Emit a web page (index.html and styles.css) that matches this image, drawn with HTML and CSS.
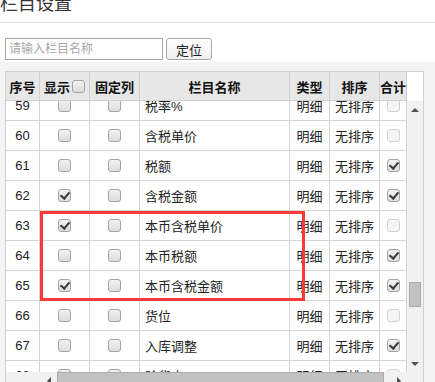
FILE: index.html
```html
<!DOCTYPE html>
<html lang="zh-CN">
<head>
    <meta charset="UTF-8">
    <meta name="viewport" content="width=device-width, initial-scale=1.0">
    <title>栏目设置</title>
    <link rel="stylesheet" href="styles.css">
</head>
<body>

    <div class="page-head">
        <h1 class="title">栏目设置</h1>
    </div>

    <!-- Search -->
    <div class="search-bar">
        <input class="search-input" type="text" placeholder="请输入栏目名称">
        <button class="btn">定位</button>
    </div>

    <div class="content">
        <div class="grid">
            <div class="grid-head">
                <div class="row head-row">
                    <div class="cell">序号</div>
                    <div class="cell">显示<span class="cb head-cb"></span></div>
                    <div class="cell">固定列</div>
                    <div class="cell">栏目名称</div>
                    <div class="cell">类型</div>
                    <div class="cell">排序</div>
                    <div class="cell">合计</div>
                </div>
                <div class="head-fill"></div>
            </div>

            <div class="grid-body">
                <div class="rows-view">
                    <div class="rows">
                        <div class="row">
                            <div class="cell">59</div>
                            <div class="cell"><span class="cb"></span></div>
                            <div class="cell"><span class="cb"></span></div>
                            <div class="cell name">税率%</div>
                            <div class="cell">明细</div>
                            <div class="cell">无排序</div>
                            <div class="cell"><span class="cb off"></span></div>
                        </div>
                        <div class="row">
                            <div class="cell">60</div>
                            <div class="cell"><span class="cb"></span></div>
                            <div class="cell"><span class="cb"></span></div>
                            <div class="cell name">含税单价</div>
                            <div class="cell">明细</div>
                            <div class="cell">无排序</div>
                            <div class="cell"><span class="cb off"></span></div>
                        </div>
                        <div class="row">
                            <div class="cell">61</div>
                            <div class="cell"><span class="cb"></span></div>
                            <div class="cell"><span class="cb"></span></div>
                            <div class="cell name">税额</div>
                            <div class="cell">明细</div>
                            <div class="cell">无排序</div>
                            <div class="cell"><span class="cb on"></span></div>
                        </div>
                        <div class="row">
                            <div class="cell">62</div>
                            <div class="cell"><span class="cb on"></span></div>
                            <div class="cell"><span class="cb"></span></div>
                            <div class="cell name">含税金额</div>
                            <div class="cell">明细</div>
                            <div class="cell">无排序</div>
                            <div class="cell"><span class="cb on"></span></div>
                        </div>
                        <div class="row">
                            <div class="cell">63</div>
                            <div class="cell"><span class="cb on"></span></div>
                            <div class="cell"><span class="cb"></span></div>
                            <div class="cell name">本币含税单价</div>
                            <div class="cell">明细</div>
                            <div class="cell">无排序</div>
                            <div class="cell"><span class="cb off"></span></div>
                        </div>
                        <div class="row">
                            <div class="cell">64</div>
                            <div class="cell"><span class="cb"></span></div>
                            <div class="cell"><span class="cb"></span></div>
                            <div class="cell name">本币税额</div>
                            <div class="cell">明细</div>
                            <div class="cell">无排序</div>
                            <div class="cell"><span class="cb on"></span></div>
                        </div>
                        <div class="row">
                            <div class="cell">65</div>
                            <div class="cell"><span class="cb on"></span></div>
                            <div class="cell"><span class="cb"></span></div>
                            <div class="cell name">本币含税金额</div>
                            <div class="cell">明细</div>
                            <div class="cell">无排序</div>
                            <div class="cell"><span class="cb on"></span></div>
                        </div>
                        <div class="row">
                            <div class="cell">66</div>
                            <div class="cell"><span class="cb"></span></div>
                            <div class="cell"><span class="cb"></span></div>
                            <div class="cell name">货位</div>
                            <div class="cell">明细</div>
                            <div class="cell">无排序</div>
                            <div class="cell"><span class="cb off"></span></div>
                        </div>
                        <div class="row">
                            <div class="cell">67</div>
                            <div class="cell"><span class="cb"></span></div>
                            <div class="cell"><span class="cb"></span></div>
                            <div class="cell name">入库调整</div>
                            <div class="cell">明细</div>
                            <div class="cell">无排序</div>
                            <div class="cell"><span class="cb on"></span></div>
                        </div>
                        <div class="row">
                            <div class="cell">68</div>
                            <div class="cell"><span class="cb"></span></div>
                            <div class="cell"><span class="cb"></span></div>
                            <div class="cell name">验货人</div>
                            <div class="cell">明细</div>
                            <div class="cell">无排序</div>
                            <div class="cell"><span class="cb off"></span></div>
                        </div>
                    </div>
                </div>

                <!-- vertical scrollbar -->
                <div class="vscroll">
                    <div class="sb-btn"><span class="arrow up"></span></div>
                    <div class="v-track"><div class="v-thumb"></div></div>
                    <div class="sb-btn"><span class="arrow down"></span></div>
                </div>
            </div>

            <!-- horizontal scrollbar -->
            <div class="hscroll">
                <div class="h-fill"></div>
                <div class="h-bar">
                    <div class="sb-btn"><span class="arrow left"></span></div>
                    <div class="h-track"><div class="h-thumb"></div></div>
                    <div class="sb-btn"><span class="arrow right"></span></div>
                </div>
                <div class="corner"></div>
            </div>

            <div class="mark"></div>
        </div>
    </div>

</body>
</html>
```

FILE: styles.css
```css
* {
    margin: 0;
    padding: 0;
    box-sizing: border-box;
}
html, body {
    height: 100%;
    overflow: hidden;
}
body {
    font-family: "Liberation Sans", "Noto Sans CJK SC", sans-serif;
    font-size: 13px;
    color: #222;
    background: #fff;
    display: flex;
    flex-direction: column;
}


.page-head {
    height: 23px;
    padding-bottom: 9px;
    border-bottom: 1px solid #e3e3e3;
    display: flex;
    align-items: flex-end;
}
.title {
    font-size: 18px;
    font-weight: normal;
    line-height: 18px;
    color: #333;
}


.search-bar {
    display: flex;
    gap: 3px;
    padding: 15px 5px 2px;
}
.search-input {
    width: 158px;
    height: 22px;
    border: 1px solid #a6a6a6;
    padding: 0 3px;
    font-family: inherit;
    font-size: 12px;
    outline: none;
}
.search-input::placeholder {
    color: #a8a8a8;
}
.btn {
    width: 46px;
    height: 22px;
    border: 1px solid #a9a9a9;
    border-radius: 3px;
    background: linear-gradient(#ffffff, #f0f0f0);
    font-family: inherit;
    font-size: 13px;
    color: #222;
}


.content {
    flex: 1;
    background: #f4f4f4;
    padding: 9px 0 0 5px;
}
.grid {
    position: relative;
    width: 419px;
    border: 1px solid #cfcfcf;
    border-bottom: none;
    background: #fff;
}
.row {
    display: grid;
    grid-template-columns: 34px 50px 50px 150px 40px 50px 27px;
    width: 401px;
    height: 30px;
}
.cell {
    display: flex;
    align-items: center;
    justify-content: center;
    border-right: 1px solid #d4d4d4;
    border-bottom: 1px solid #d4d4d4;
    white-space: nowrap;
    overflow: hidden;
}
.cell.name {
    justify-content: flex-start;
    padding-left: 5px;
}


.grid-head {
    display: flex;
}
.head-row {
    height: 29px;
    background: #e7e7e7;
    font-weight: bold;
    color: #111;
}
.head-row .cell {
    border-color: #cfcfcf;
    overflow: visible;
}
.head-fill {
    flex: 1;
}
.head-cb {
    margin-left: 2px;
}


.grid-body {
    display: flex;
    height: 271px;
}
.rows-view {
    width: 401px;
    overflow: hidden;
}
.rows {
    margin-top: -10px;
}


.cb {
    position: relative;
    display: inline-block;
    width: 13px;
    height: 13px;
    border: 1px solid #a3a3a3;
    border-radius: 3px;
    background: linear-gradient(#f2f2f2, #dcdcdc);
}
.cb.on::after {
    content: "";
    position: absolute;
    left: 3px;
    top: 0px;
    width: 4px;
    height: 7px;
    border: solid #3a3a3a;
    border-width: 0 2px 2px 0;
    transform: rotate(40deg);
}
.cb.off {
    border-color: #d2d2d2;
    background: #f5f5f5;
}


.vscroll {
    width: 16px;
    background: #f1f1f1;
    display: flex;
    flex-direction: column;
}
.sb-btn {
    width: 16px;
    height: 17px;
    display: flex;
    align-items: center;
    justify-content: center;
}
.v-track {
    flex: 1;
}
.v-thumb {
    height: 25px;
    margin: 164px 2px 0;
    background: #c2c2c2;
    border: 1px solid #acacac;
}
.hscroll {
    display: flex;
    height: 17px;
    background: #f1f1f1;
}
.h-fill {
    width: 34px;
}
.h-bar {
    width: 367px;
    display: flex;
}
.h-bar .sb-btn {
    width: 17px;
}
.h-track {
    flex: 1;
}
.h-thumb {
    width: 327px;
    height: 13px;
    margin-top: 0;
    background: #c2c2c2;
    border: 1px solid #acacac;
}
.corner {
    width: 16px;
}

.arrow {
    width: 0;
    height: 0;
    border: 4px solid transparent;
}
.arrow.up {
    border-top: none;
    border-bottom-color: #505050;
}
.arrow.down {
    border-bottom: none;
    border-top-color: #505050;
}
.arrow.left {
    border-left: none;
    border-right-color: #505050;
}
.arrow.right {
    border-right: none;
    border-left-color: #505050;
}


.mark {
    position: absolute;
    left: 34px;
    top: 139px;
    width: 265px;
    height: 90px;
    border: 3px solid #ff3838;
}
```
